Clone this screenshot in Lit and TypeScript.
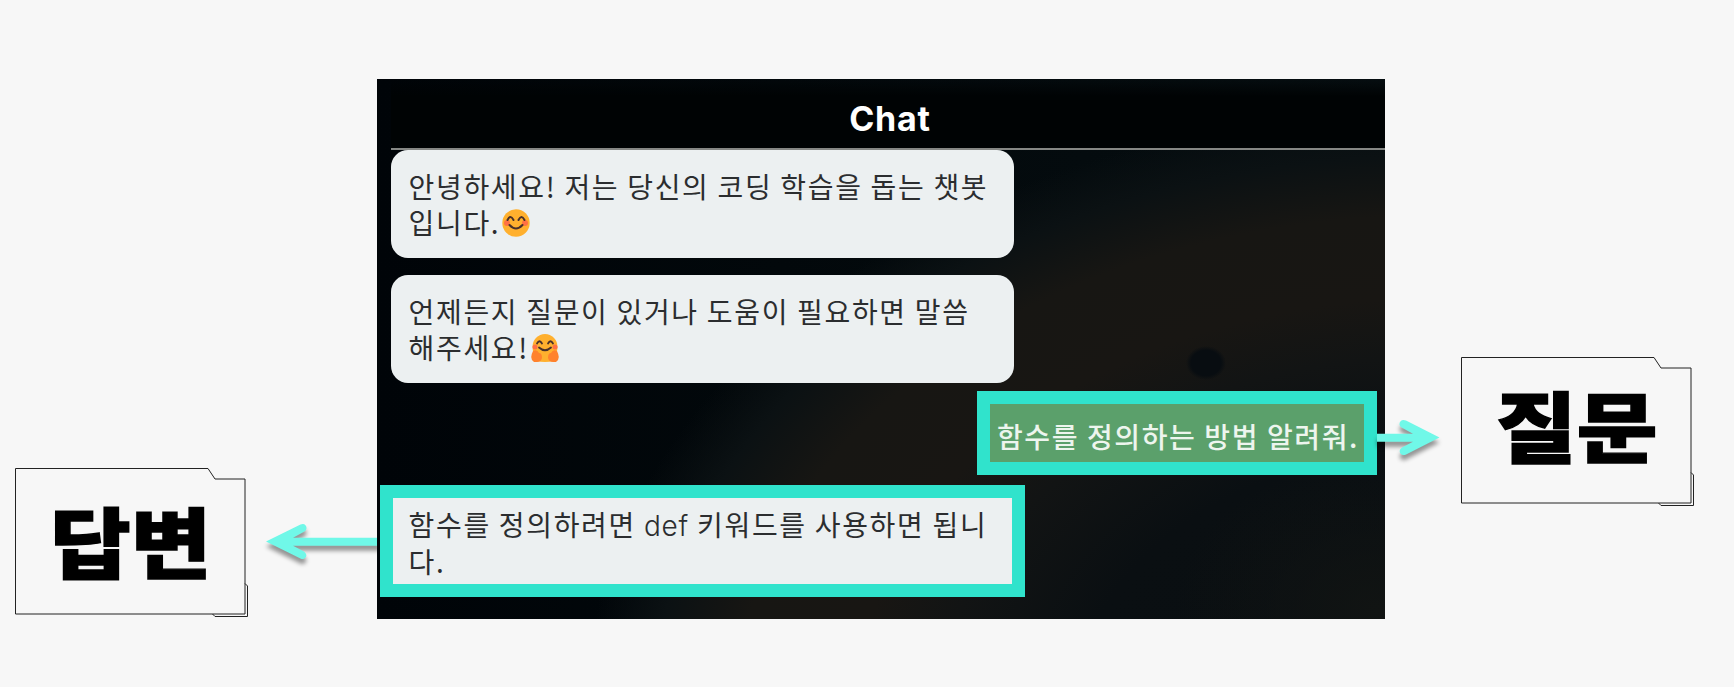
import { LitElement, html, css, svg } from "lit";
import { customElement, property } from "lit/decorators.js";

@customElement("callout-label")
class CalloutLabel extends LitElement {
  @property() text = "";
  static styles = css`
    :host { display: grid; width: 234px; height: 150px; --word-top: 27px; }
    svg, .word { grid-area: 1 / 1; }
    svg { display: block; overflow: visible; }
    .word {
      place-self: start; margin: var(--word-top) 0 0 35px; font: 900 82px/100px "Noto Sans CJK KR", sans-serif;
      color: #000; white-space: nowrap; -webkit-text-stroke: 1.500px #000;
      transform: scale(1.07, .94); transform-origin: 0 0;
    }
  `;
  render() {
    return html`<svg width="234" height="150" fill="none" stroke="#222" stroke-width="1">
        <path d="M.5 .5H193L200 11H230V146H.5Z"/>
        <path d="M230 115.500L232.500 118V148.500H200L197.500 146"/>
      </svg><span class="word">${this.text}</span>`;
  }
}

@customElement("flow-arrow")
class FlowArrow extends LitElement {
  @property() direction = "left";
  static styles = css`
    :host { display: block; height: 44px; }
    svg { display: block; overflow: visible; filter: drop-shadow(0 5px 2px rgba(0,0,0,.4)); }
  `;
  render() {
    const left = this.direction === "left";
    return html`<svg width=${left ? 111 : 63} height="44" fill="#70f8e8">
      ${left
        ? svg`<path d="M0 21.500L34.500 4.500C40 2 43 9 38 11.800L27 17.800H114V25.800H27L38 31.500C43 35 39 41 34.500 38.500Z"/>`
        : svg`<path d="M62.500 21.500L29 4.500C23 2 20 9 25 11.800L36 17.800H0V25.800H36L25 31.500C20 35 24 41 29 38.500Z"/>`}
    </svg>`;
  }
}

@customElement("app-root")
class AppRoot extends LitElement {
  static styles = css`
    :host { display: block; height: 687px; overflow: hidden; background: #f7f7f7; }
    .stage { display: flex; align-items: flex-start; }
    .answer-label { margin: 468px 0 0 15px; --word-top: 25px; }
    .answer-arrow { margin: 520px 0 0 17px; width: 111px; flex: none; }
    .question-arrow { margin: 416px 0 0 -8px; width: 63px; flex: none; position: relative; }
    .question-label { margin: 357px 0 0 21px; --word-top: 20px; }
    .panel {
      flex: none; width: 1008px; height: 539.5px; margin-top: 79px; box-sizing: border-box;
      display: flex; flex-direction: column; position: relative;
      font: 400 28px/36px "Noto Sans CJK KR", sans-serif; letter-spacing: 1.680px; color: #2b2d2f;
      background:
        radial-gradient(ellipse 20px 17px at 829px 284px, #080d11 75%, transparent 100%),
        radial-gradient(ellipse 200px 150px at 1000px 530px, #111413 0, transparent 100%),
        radial-gradient(ellipse 850px 590px at 1060px 620px, #090e11 0, #0a0f12 42%, #121414 58%, #181613 68%, #171613 82%, #0b1113 92%, transparent 100%),
        linear-gradient(90deg, #000408 0, #02080b 40%, #060e11 100%);
    }
    .header {
      height: 69px; margin-left: 14px; border-bottom: 2px solid #858784; flex: none;
      display: flex; justify-content: center; align-items: center;
      background: linear-gradient(180deg, transparent 0, #000304 25%);
    }
    .header h1 { margin: 11px 0 0 4px; font: 700 34px/40px Inter, sans-serif; letter-spacing: .8px; color: #fff; }
    .messages { display: flex; flex-direction: column; align-items: flex-start; }
    .bubble {
      box-sizing: border-box; width: 623px; height: 108px; margin-left: 13.500px; padding: 18px 18px 0;
      border-radius: 17px; background: #ecf0f1;
    }
    .bubble + .bubble { margin-top: 17px; }
    .line { display: flex; align-items: center; height: 36px; white-space: pre; }
    .emoji { width: 28px; height: 28px; margin: 2px 0 0 5px; }
    .mark { letter-spacing: -1.500px; }
    .question {
      align-self: flex-end; box-sizing: border-box; width: 400px; height: 84px; margin: 8px 8px 0 0;
      padding: 14px 7px 0; border: 13px solid #30e3cc; background: #5ba06b; color: #edf5ee; font-weight: 500;
      letter-spacing: 1.600px;
    }
    .answer {
      box-sizing: border-box; width: 645px; height: 112px; margin: 10px 0 0 2.500px; padding: 9px 16px 0;
      border: 13px solid #30e3cc; background: #ecf0f1;
    }
    .latin { font-family: Inter, sans-serif; font-weight: 300; letter-spacing: .8px; }
  `;

  smile() {
    return html`<svg class="emoji" viewBox="0 0 28 28">
      <circle cx="14" cy="14" r="13.700" fill="#ffb02e"/>
      <circle cx="5" cy="14" r="3" fill="#ff7043"/><circle cx="23" cy="14" r="3" fill="#ff7043"/>
      <path d="M5.500 11Q8.500 5 11.500 11M16.500 11Q19.500 5 22.500 11M7.500 16Q14 23 20.500 16" fill="none" stroke="#49302a" stroke-width="2" stroke-linecap="round"/>
    </svg>`;
  }

  hug() {
    return html`<svg class="emoji" viewBox="0 0 28 28">
      <ellipse cx="14" cy="13" rx="12.500" ry="13" fill="#ffb02e"/>
      <path d="M5 24H23V27Q14 29 5 27Z" fill="#ffb02e"/>
      <circle cx="4" cy="13" r="2.500" fill="#ff7043"/><circle cx="24" cy="13" r="2.500" fill="#ff7043"/>
      <path d="M2 17Q6 15 8 19Q11 19 11 24Q10 28 6 28H3Q-2 25 2 17M26 17Q22 15 20 19Q17 19 17 24Q18 28 22 28H25Q30 25 26 17" fill="#ff822d"/>
      <path d="M6 9.500Q8.500 5 11 9.500M17 9.500Q19.500 5 22 9.500M8 13.500Q14 19 20 13.500" fill="none" stroke="#49302a" stroke-width="1.800" stroke-linecap="round"/>
    </svg>`;
  }

  render() {
    return html`<div class="stage">
      <callout-label class="answer-label" text="답변"></callout-label>
      <flow-arrow class="answer-arrow" direction="left"></flow-arrow>
      <section class="panel">
        <header class="header"><h1>Chat</h1></header>
        <div class="messages">
          <div class="bubble">
            <div class="line">안녕하세요! 저는 당신의 코딩 학습을 돕는 챗봇</div>
            <div class="line"><div>입니다<span class="mark">.</span></div>${this.smile()}</div>
          </div>
          <div class="bubble">
            <div class="line">언제든지 질문이 있거나 도움이 필요하면 말씀</div>
            <div class="line"><div>해주세요<span class="mark">!</span></div>${this.hug()}</div>
          </div>
          <div class="question"><div class="line">함수를 정의하는 방법 알려줘.</div></div>
          <div class="answer">
            <div class="line"><div>함수를 정의하려면 <span class="latin">def</span> 키워드를 사용하면 됩니</div></div>
            <div class="line">다.</div>
          </div>
        </div>
      </section>
      <flow-arrow class="question-arrow" direction="right"></flow-arrow>
      <callout-label class="question-label" text="질문"></callout-label>
    </div>`;
  }
}
